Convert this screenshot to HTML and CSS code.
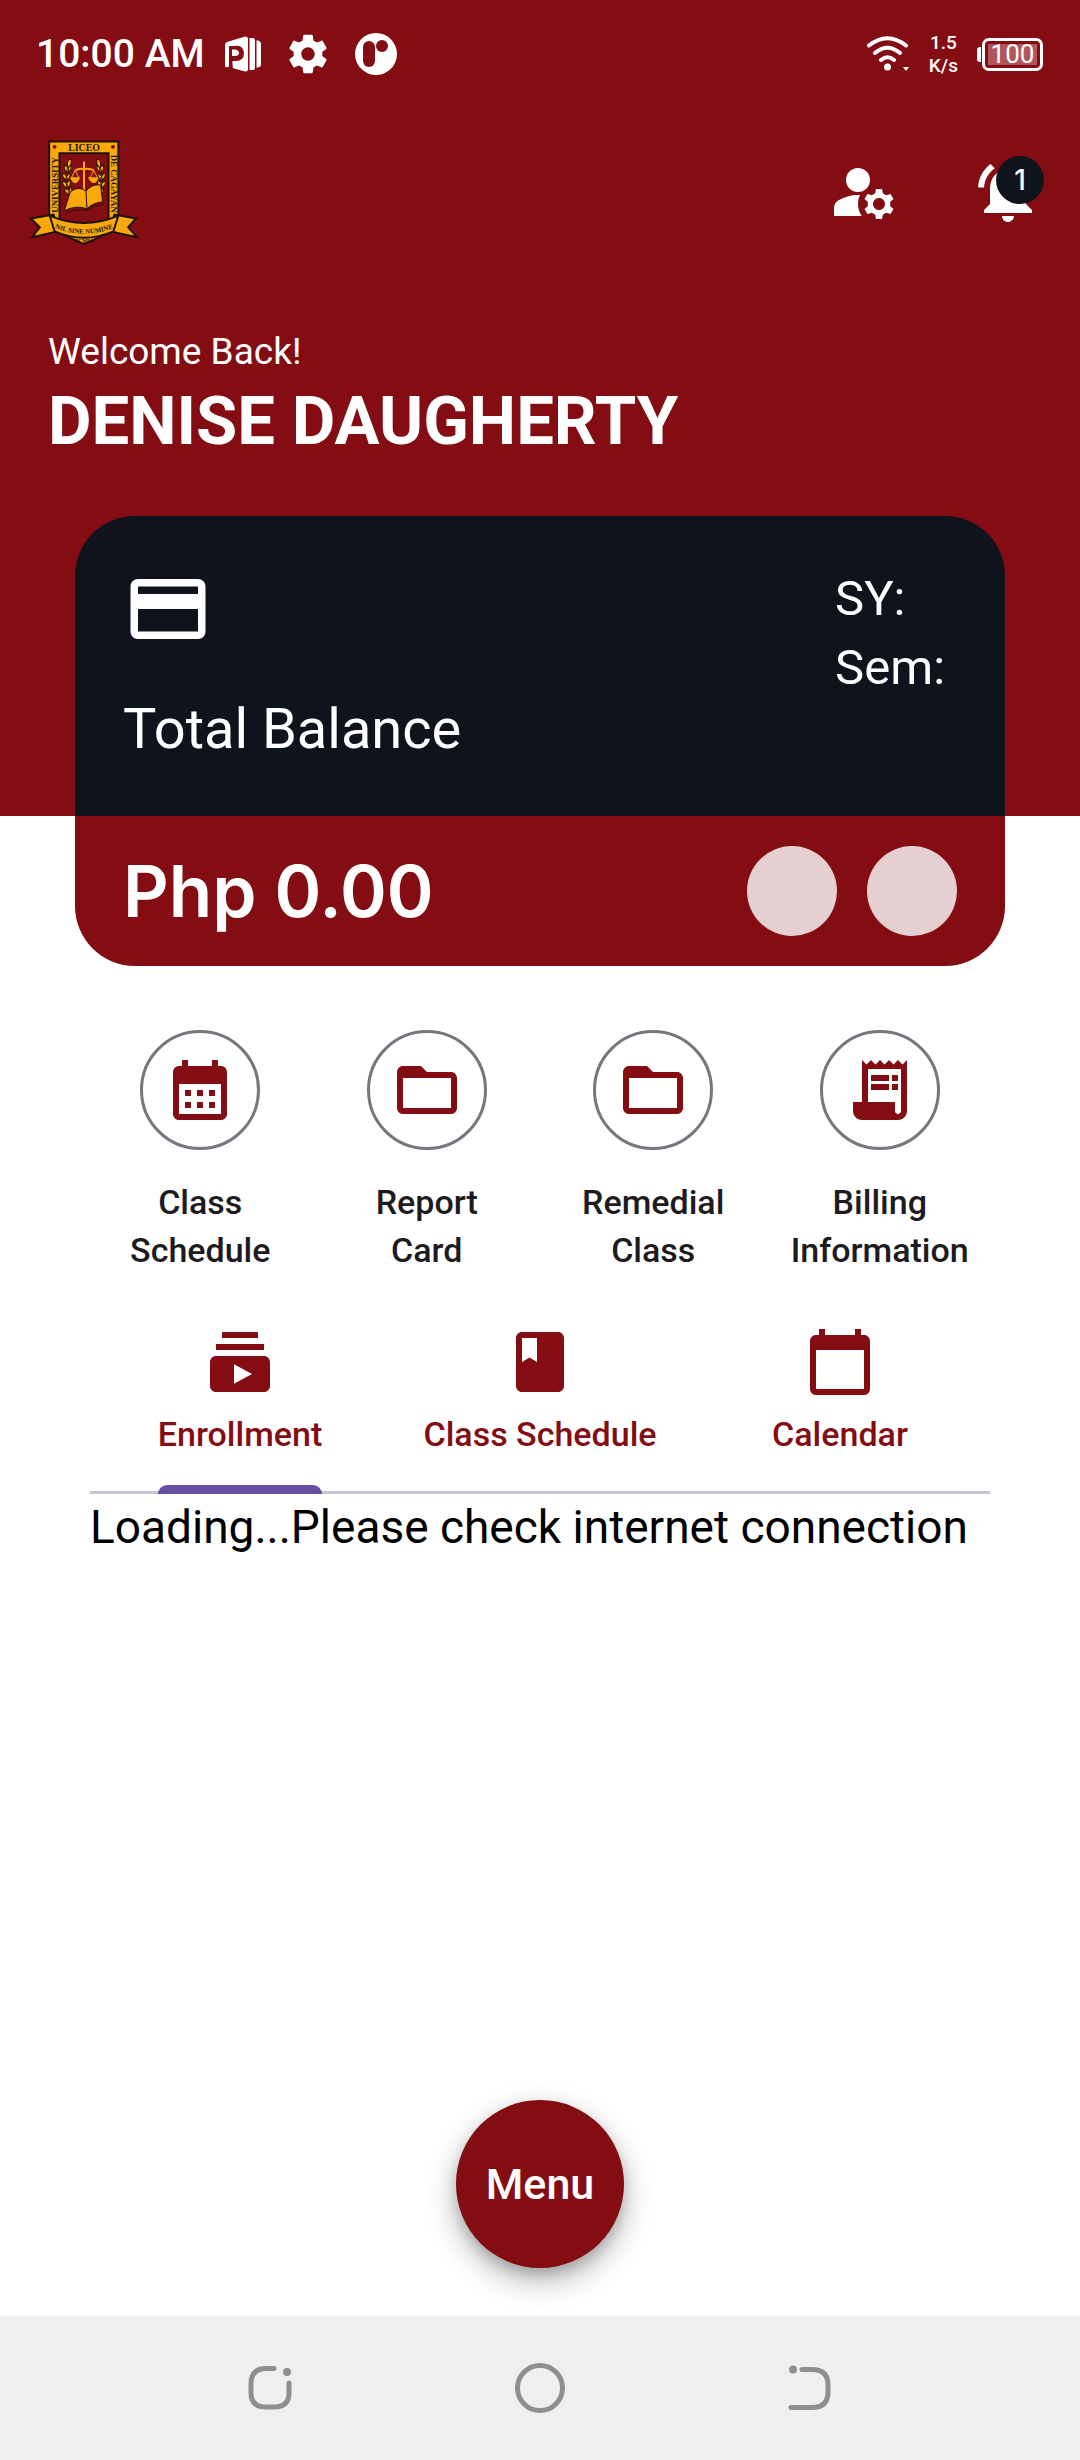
FILE: index.html
```html
<!DOCTYPE html>
<html lang="en">
<head>
<meta charset="utf-8">
<meta name="viewport" content="width=device-width, initial-scale=1">
<title>Student Portal</title>
<link rel="stylesheet" href="styles.css">
</head>
<body>
<div class="app">
  <header class="hero">
    <div class="status">
      <time class="clock">10:00 AM</time>
      <div class="status-apps">
        <svg width="36" height="36" viewBox="0 0 36 36" fill="#fff" aria-hidden="true">
          <path d="M2 6 20 0.500Q23 0 23 3V33Q23 36 20 35.500L7.500 32V29L3 31Q0 32 0 29V9Q0 7 2 6Z"/>
          <path d="M4 10H9Q18 8 19 17Q19 25.500 10 25H7.500V32H4Z" fill="#840d14"/>
          <path d="M7 13.500H10Q14 14 14 17Q14 20 10 20H7Z"/>
          <path d="M24.500 2H28Q30 2 30 5V31Q30 34 28 34H24.500ZM31.500 4.500H33Q36 5 36 8V28Q36 31 33 31.500H31.500Z"/>
        </svg>
        <svg width="46" height="46" viewBox="0 0 24 24" fill="#fff" aria-hidden="true"><path d="M19.43 12.98c.04-.32.07-.64.07-.98s-.03-.66-.07-.98l2.110-1.650c.19-.15.24-.42.12-.64l-2-3.460c-.12-.22-.39-.3-.61-.22l-2.490 1c-.52-.4-1.080-.73-1.690-.98l-.38-2.650C14.460 2.180 14.250 2 14 2h-4c-.25 0-.46.18-.49.42l-.38 2.650c-.61.25-1.170.59-1.690.98l-2.490-1c-.23-.09-.49 0-.61.22l-2 3.460c-.13.22-.07.49.12.64l2.110 1.650c-.04.32-.07.65-.07.98s.03.66.07.98l-2.110 1.650c-.19.15-.24.42-.12.64l2 3.460c.12.22.39.3.61.22l2.490-1c.52.4 1.080.73 1.690.98l.38 2.650c.03.24.24.42.49.42h4c.25 0 .46-.18.49-.42l.38-2.650c.61-.25 1.170-.59 1.690-.98l2.490 1c.23.09.49 0 .61-.22l2-3.460c.12-.22.07-.49-.12-.64l-2.110-1.650zM12 15.500c-1.930 0-3.500-1.570-3.500-3.500s1.570-3.500 3.500-3.500 3.500 1.570 3.500 3.500-1.570 3.500-3.500 3.500z"/></svg>
        <svg width="42" height="42" viewBox="0 0 42 42" aria-hidden="true"><circle cx="21" cy="21" r="21" fill="#fff"/><rect x="8" y="8" width="12" height="26" rx="6" fill="#840d14"/><circle cx="27" cy="13" r="6" fill="#840d14"/></svg>
      </div>
      <div class="status-system">
        <svg width="42" height="36" viewBox="0 0 42 36" fill="none" stroke="#fff" stroke-width="4" stroke-linecap="round" aria-hidden="true">
          <path d="M2 9.500Q20.500-5 39 9.500M8 17Q20.500 6.500 33 17M14 24Q20.500 18.500 27 24"/><circle cx="20.500" cy="31" r="3.500" fill="#fff" stroke="none"/><path d="M36 31h6l-3 4z" fill="#fff" stroke="none"/>
        </svg>
        <div class="speed"><span>1.5</span><span>K/s</span></div>
        <div class="battery"><span class="battery-level">100</span></div>
      </div>
    </div>

    <div class="topbar">
      <svg class="crest" width="110" height="106" viewBox="0 0 112 108" role="img" aria-label="Liceo de Cagayan University">
        <path d="M20.500 1.500H91V90L56 106 20.500 90Z" fill="#f9a90b" stroke="#1d1208" stroke-width="2"/>
        <path d="M31 13.500H81V86H31Z" fill="#840d14" stroke="#1d1208" stroke-width="2"/>
        <circle cx="26" cy="7" r="2" fill="#840d14"/><circle cx="85.500" cy="7" r="2" fill="#840d14"/>
        <text class="crest-name" x="56" y="11" text-anchor="middle">LICEO</text>
        <text class="crest-side" transform="translate(29 74) rotate(-90)">UNIVERSITY</text>
        <text class="crest-side" transform="translate(83 15) rotate(90)">DE CAGAYAN</text>
        <g fill="none" stroke="#f9a90b" stroke-width="2"><path d="M56 22V54M47 31Q52 28 56 30Q60 28 66 31"/><path d="M47 31 43 39M47 31 51 39M66 31 62 39M66 31 70 39" stroke-width="1"/></g>
        <path d="M42 38H52Q50 44 47 44Q43 43 42 38ZM60 38H71Q69 44 66 44Q62 43 60 38Z" fill="#f9a90b"/>
        <g fill="#f9a90b" stroke="#1d1208" stroke-width="1">
          <path id="leaf" d="M42 19Q45 24 40 28Q37 23 42 19ZM36 26Q41 27 40 33Q35 32 36 26ZM44 26Q43 32 38 34Q38 28 44 26ZM34 34Q39 35 39 41Q34 40 34 34ZM42 34Q42 40 37 42Q37 36 42 34ZM34 42Q39 43 40 49Q34 48 34 42ZM42 41Q43 47 38 50Q37 43 42 41ZM36 50Q41 49 43 55Q37 56 36 50ZM42 48Q46 52 42 57Q39 53 42 48Z"/>
          <use href="#leaf" transform="matrix(-1 0 0 1 112 0)"/>
          <path d="M36 72 42 53Q50 46 58 52Q65 44 73 46L75 63Q65 64 59 70Q48 66 36 72Z"/>
          <path d="M58 52 59 70M37 75Q48 69 59 72Q65 66 76 66" fill="none"/>
        </g>
        <path d="M2 80 25 76 30 93 3 99 11 89ZM109 80 87 76 82 93 110 99 101 89Z" fill="#f9a90b" stroke="#1d1208" stroke-width="2"/>
        <path d="M23 75 31 84 26 90ZM89 75 81 84 86 90Z" fill="#1d1208"/>
        <path d="M21 77Q56 92 91 77L86 93Q56 106 26 93Z" fill="#f9a90b" stroke="#1d1208" stroke-width="2"/>
        <path id="motto" d="M22 88Q56 103 90 88" fill="none"/>
        <text class="crest-motto"><textPath href="#motto" startOffset="50%" text-anchor="middle">NIL SINE NUMINE</textPath></text>
        <text class="crest-year" x="56" y="105" text-anchor="middle">MCMLV</text>
      </svg>
      <div class="top-actions">
        <button class="icon-button" type="button" aria-label="Account settings">
          <svg class="icon" viewBox="0 0 24 24" aria-hidden="true"><circle cx="10" cy="8" r="4"/><path d="M10.670 13.020c-.22-.01-.44-.02-.67-.02-2.420 0-4.680.67-6.610 1.820-.88.52-1.390 1.500-1.390 2.530V20h9.260c-.79-1.130-1.260-2.510-1.260-4 0-1.070.25-2.070.67-2.980zM20.750 16c0-.22-.03-.42-.06-.63l1.140-1.010-1-1.730-1.450.49c-.32-.27-.68-.48-1.080-.63L18 11h-2l-.3 1.490c-.4.15-.76.36-1.080.63l-1.450-.49-1 1.730 1.140 1.010c-.03.21-.06.41-.06.63s.03.42.06.63l-1.140 1.010 1 1.730 1.450-.49c.32.27.68.48 1.080.63L16 21h2l.3-1.490c.4-.15.76-.36 1.080-.63l1.450.49 1-1.730-1.140-1.010c.03-.21.06-.41.06-.63zM17 18c-1.100 0-2-.9-2-2s.9-2 2-2 2 .9 2 2-.9 2-2 2z"/></svg>
        </button>
        <button class="icon-button" type="button" aria-label="Notifications">
          <svg class="icon" viewBox="0 0 24 24" aria-hidden="true"><path d="M7.580 4.080L6.150 2.650C3.750 4.480 2.170 7.300 2.030 10.500h2c.15-2.650 1.510-4.970 3.550-6.420zm12.390 6.420h2c-.15-3.200-1.730-6.020-4.120-7.850l-1.420 1.430c2.020 1.450 3.390 3.770 3.540 6.420zM18 11c0-3.070-1.640-5.640-4.500-6.320V4c0-.83-.67-1.500-1.500-1.500s-1.500.67-1.500 1.500v.68C7.630 5.360 6 7.920 6 11v5l-2 2v1h16v-1l-2-2v-5zm-6 11c.14 0 .27-.01.4-.04.65-.14 1.180-.58 1.440-1.180.1-.24.15-.5.15-.78h-4c.01 1.100.9 2 2.010 2z"/></svg>
          <span class="badge">1</span>
        </button>
      </div>
    </div>

    <div class="greeting">
      <p class="welcome">Welcome Back!</p>
      <h1 class="name">DENISE DAUGHERTY</h1>
    </div>
  </header>

  <main class="content">
    <section class="card">
      <div class="card-top">
        <div class="card-summary">
          <svg class="card-icon" viewBox="0 0 24 24" aria-hidden="true"><path d="M20 4H4c-1.110 0-1.990.89-1.990 2L2 18c0 1.110.89 2 2 2h16c1.110 0 2-.89 2-2V6c0-1.110-.89-2-2-2zm0 14H4v-6h16v6zm0-10H4V6h16v2z"/></svg>
          <h2 class="card-title">Total Balance</h2>
        </div>
        <div class="term"><span>SY:</span><span>Sem:</span></div>
      </div>
      <div class="card-bottom">
        <strong class="amount">Php 0.00</strong>
        <span class="dot"></span>
        <span class="dot"></span>
      </div>
    </section>

    <nav class="shortcuts" aria-label="Shortcuts">
      <button class="shortcut" type="button">
        <span class="ring"><svg class="icon" viewBox="0 0 24 24" aria-hidden="true"><path d="M19 4h-1V2h-2v2H8V2H6v2H5c-1.110 0-1.990.9-1.990 2L3 20c0 1.100.89 2 2 2h14c1.100 0 2-.9 2-2V6c0-1.100-.9-2-2-2zm0 16H5V10h14v10zM9 14H7v-2h2v2zm4 0h-2v-2h2v2zm4 0h-2v-2h2v2zm-8 4H7v-2h2v2zm4 0h-2v-2h2v2zm4 0h-2v-2h2v2z"/></svg></span>
        <span class="shortcut-label">Class<br>Schedule</span>
      </button>
      <button class="shortcut" type="button">
        <span class="ring"><svg class="icon" viewBox="0 0 24 24" aria-hidden="true"><path d="M20 6h-8l-2-2H4c-1.100 0-1.990.9-1.990 2L2 18c0 1.100.9 2 2 2h16c1.100 0 2-.9 2-2V8c0-1.100-.9-2-2-2zm0 12H4V8h16v10z"/></svg></span>
        <span class="shortcut-label">Report<br>Card</span>
      </button>
      <button class="shortcut" type="button">
        <span class="ring"><svg class="icon" viewBox="0 0 24 24" aria-hidden="true"><path d="M20 6h-8l-2-2H4c-1.100 0-1.990.9-1.990 2L2 18c0 1.100.9 2 2 2h16c1.100 0 2-.9 2-2V8c0-1.100-.9-2-2-2zm0 12H4V8h16v10z"/></svg></span>
        <span class="shortcut-label">Remedial<br>Class</span>
      </button>
      <button class="shortcut" type="button">
        <span class="ring"><svg class="icon" viewBox="0 0 24 24" aria-hidden="true"><path d="M19.500 3.500 18 2l-1.500 1.500L15 2l-1.500 1.500L12 2l-1.500 1.500L9 2 7.500 3.500 6 2v14H3v3c0 1.660 1.340 3 3 3h12c1.660 0 3-1.340 3-3V2l-1.500 1.500zM19 19c0 .55-.45 1-1 1s-1-.45-1-1v-3H8V5h11v14z"/><path d="M9 7h6v2H9zM16 7h2v2h-2zM9 10h6v2H9zM16 10h2v2h-2z"/></svg></span>
        <span class="shortcut-label">Billing<br>Information</span>
      </button>
    </nav>

    <section class="panel">
      <div class="tabs" role="tablist">
        <button class="tab" type="button" role="tab" aria-selected="true"><span class="tab-body">
          <svg class="icon" viewBox="0 0 24 24" aria-hidden="true"><path d="M20 8H4V6h16v2zm-2-6H6v2h12V2zm4 10v8c0 1.100-.9 2-2 2H4c-1.100 0-2-.9-2-2v-8c0-1.100.9-2 2-2h16c1.100 0 2 .9 2 2zm-6 4l-6-3.270v6.530L16 16z"/></svg>
          <span>Enrollment</span></span></button>
        <button class="tab" type="button" role="tab" aria-selected="false"><span class="tab-body">
          <svg class="icon" viewBox="0 0 24 24" aria-hidden="true"><path d="M18 2H6c-1.100 0-2 .9-2 2v16c0 1.100.9 2 2 2h12c1.100 0 2-.9 2-2V4c0-1.100-.9-2-2-2zM6 4h5v8l-2.500-1.500L6 12V4z"/></svg>
          <span>Class Schedule</span></span></button>
        <button class="tab" type="button" role="tab" aria-selected="false"><span class="tab-body">
          <svg class="icon" viewBox="0 0 24 24" aria-hidden="true"><path d="M20 3h-1V1h-2v2H7V1H5v2H4c-1.100 0-2 .9-2 2v16c0 1.100.9 2 2 2h16c1.100 0 2-.9 2-2V5c0-1.100-.9-2-2-2zm0 18H4V8h16v13z"/></svg>
          <span>Calendar</span></span></button>
      </div>
      <p class="message" role="tabpanel">Loading...Please check internet connection</p>
    </section>
  </main>

  <div class="dock"><button class="menu" type="button">Menu</button></div>

  <footer class="system-nav">
    <button class="system-button" type="button" aria-label="Recent apps"><svg width="50" height="50" viewBox="0 0 50 50" aria-hidden="true"><path d="M29 5.500H21Q6 5.500 6 21V30Q6 44 21 44H29Q44 44 44 30V20"/><circle cx="42" cy="9" r="4"/></svg></button>
    <button class="system-button" type="button" aria-label="Home"><svg width="50" height="50" viewBox="0 0 50 50" aria-hidden="true"><path d="M25 2.500a22.500 22.500 0 1 1 0 45a22.500 22.500 0 1 1 0-45Z"/></svg></button>
    <button class="system-button" type="button" aria-label="Back"><svg width="50" height="50" viewBox="0 0 50 50" aria-hidden="true"><path d="M17 6.500H27Q43 6.500 43 22V29Q43 44.500 27 44.500H6"/><circle cx="8" cy="6.500" r="4"/></svg></button>
  </footer>
</div>
</body>
</html>
```

FILE: styles.css
```css
:root {
  --maroon: #840d14;
  --night: #0f131c;
}

* {
  box-sizing: border-box;
}

body {
  margin: 0;
  background: #fff;
  color: #1d1b20;
  font-family: Roboto, "Liberation Sans", sans-serif;
}

h1, h2, p {
  margin: 0;
}

button {
  padding: 0;
  border: 0;
  background: none;
  color: inherit;
  font: inherit;
}

svg {
  display: block;
  flex: none;
}

.app {
  display: flex;
  flex-direction: column;
  min-height: 100vh;
}

.icon {
  width: 72px;
  height: 72px;
  fill: currentColor;
}

/* Header */
.hero {
  padding-bottom: 350px;
  background: var(--maroon);
  color: #fff;
}

.status {
  display: flex;
  align-items: center;
  height: 108px;
  padding: 0 37px 0 36px;
}

.clock {
  font-size: 39px;
  font-weight: 500;
}

.status-apps {
  display: flex;
  align-items: center;
  gap: 24px;
  margin-left: 20px;
}

.status-system {
  display: flex;
  align-items: center;
  gap: 20px;
  margin-left: auto;
}

.speed {
  display: flex;
  flex-direction: column;
  align-items: center;
  margin-right: 4px;
  font-size: 19px;
  font-weight: 500;
  line-height: 23px;
}

.battery {
  position: relative;
  width: 61px;
  height: 33px;
  padding: 3px;
  border: 3px solid #fff;
  border-radius: 7px;
}

.battery::before {
  content: "";
  position: absolute;
  left: -8px;
  top: 6px;
  width: 4px;
  height: 15px;
  border-radius: 3px 0 0 3px;
  background: #fff;
}

.battery-level {
  display: block;
  background: #b0565c;
  font-size: 26px;
  line-height: 21px;
  text-align: center;
}

.topbar {
  display: flex;
  justify-content: space-between;
  align-items: flex-start;
  padding: 32px 36px 0 29px;
}

.crest-name,
.crest-side,
.crest-motto,
.crest-year {
  fill: #1d1208;
  font-family: "Liberation Serif", serif;
  font-weight: 700;
}

.crest-name {
  font-size: 10px;
}

.crest-side {
  font-size: 9px;
}

.crest-motto {
  font-size: 7px;
}

.crest-year {
  font-size: 6px;
}

.top-actions {
  display: flex;
  gap: 72px;
  padding-top: 16px;
}

.icon-button {
  position: relative;
}

.badge {
  position: absolute;
  top: 0;
  right: 0;
  width: 48px;
  height: 48px;
  border-radius: 50%;
  background: var(--night);
  font-family: Inter, sans-serif;
  font-size: 28px;
  font-weight: 500;
  line-height: 48px;
}

.greeting {
  padding: 82px 48px 0;
}

.welcome {
  font-size: 37px;
  line-height: 48px;
}

.name {
  font-size: 67px;
  font-weight: 700;
  line-height: 90px;
}

/* Balance card */
.content {
  width: 100%;
  margin-top: -300px;
}

.card {
  margin: 0 75px;
  overflow: hidden;
  border-radius: 60px;
  background: var(--maroon);
  color: #fff;
}

.card-top {
  display: flex;
  justify-content: space-between;
  min-height: 300px;
  padding: 48px 60px 0 48px;
  background: var(--night);
}

.card-icon {
  width: 90px;
  height: 90px;
  fill: currentColor;
}

.card-title {
  margin-top: 42px;
  font-size: 56px;
  font-weight: 400;
  line-height: 66px;
}

.term {
  display: flex;
  flex-direction: column;
  font-size: 49px;
  line-height: 69px;
}

.card-bottom {
  display: flex;
  align-items: center;
  gap: 30px;
  min-height: 150px;
  padding: 0 48px;
}

.amount {
  margin-right: auto;
  font-family: Inter, sans-serif;
  font-size: 71px;
  font-weight: 600;
}

.dot {
  width: 90px;
  height: 90px;
  border-radius: 50%;
  background: #e6cfd0;
}

/* Shortcuts */
.shortcuts {
  display: grid;
  grid-template-columns: repeat(4, 1fr);
  padding: 64px 87px 0;
}

.shortcut {
  display: flex;
  flex-direction: column;
  align-items: center;
  gap: 28px;
}

.ring {
  display: grid;
  place-items: center;
  width: 120px;
  height: 120px;
  border: 3px solid #79747e;
  border-radius: 50%;
  color: var(--maroon);
}

.shortcut-label {
  font-size: 34px;
  font-weight: 500;
  line-height: 48px;
}

/* Tabs */
.panel {
  padding: 52px 90px 0;
}

.tabs {
  display: grid;
  grid-template-columns: repeat(3, 1fr);
  border-bottom: 3px solid #cac4d0;
}

.tab {
  display: flex;
  justify-content: center;
  margin-bottom: -3px;
  color: var(--maroon);
  font-size: 34px;
  font-weight: 500;
  line-height: 48px;
}

.tab-body {
  display: flex;
  flex-direction: column;
  align-items: center;
  gap: 12px;
}

.tab-body::after {
  content: "";
  width: 100%;
  height: 9px;
  margin-top: 15px;
  border-radius: 9px 9px 0 0;
}

.tab[aria-selected="true"] .tab-body::after {
  background: #6750a4;
}

.message {
  color: #000;
  font-size: 46px;
  line-height: 66px;
}

/* Floating menu and system navigation */
.dock {
  display: flex;
  justify-content: center;
  margin-top: auto;
  padding-bottom: 48px;
}

.menu {
  width: 168px;
  height: 168px;
  border-radius: 50%;
  background: var(--maroon);
  box-shadow: 0 12px 30px rgba(0, 0, 0, 0.3), 0 6px 12px rgba(0, 0, 0, 0.15);
  color: #fff;
  font-size: 43px;
  font-weight: 500;
}

.system-nav {
  display: flex;
  justify-content: center;
  align-items: center;
  gap: 220px;
  height: 144px;
  background: #efefef;
}

.system-button path {
  fill: none;
  stroke: #8f8f8f;
  stroke-width: 5px;
  stroke-linecap: round;
}

.system-button circle {
  fill: #8f8f8f;
}
```
